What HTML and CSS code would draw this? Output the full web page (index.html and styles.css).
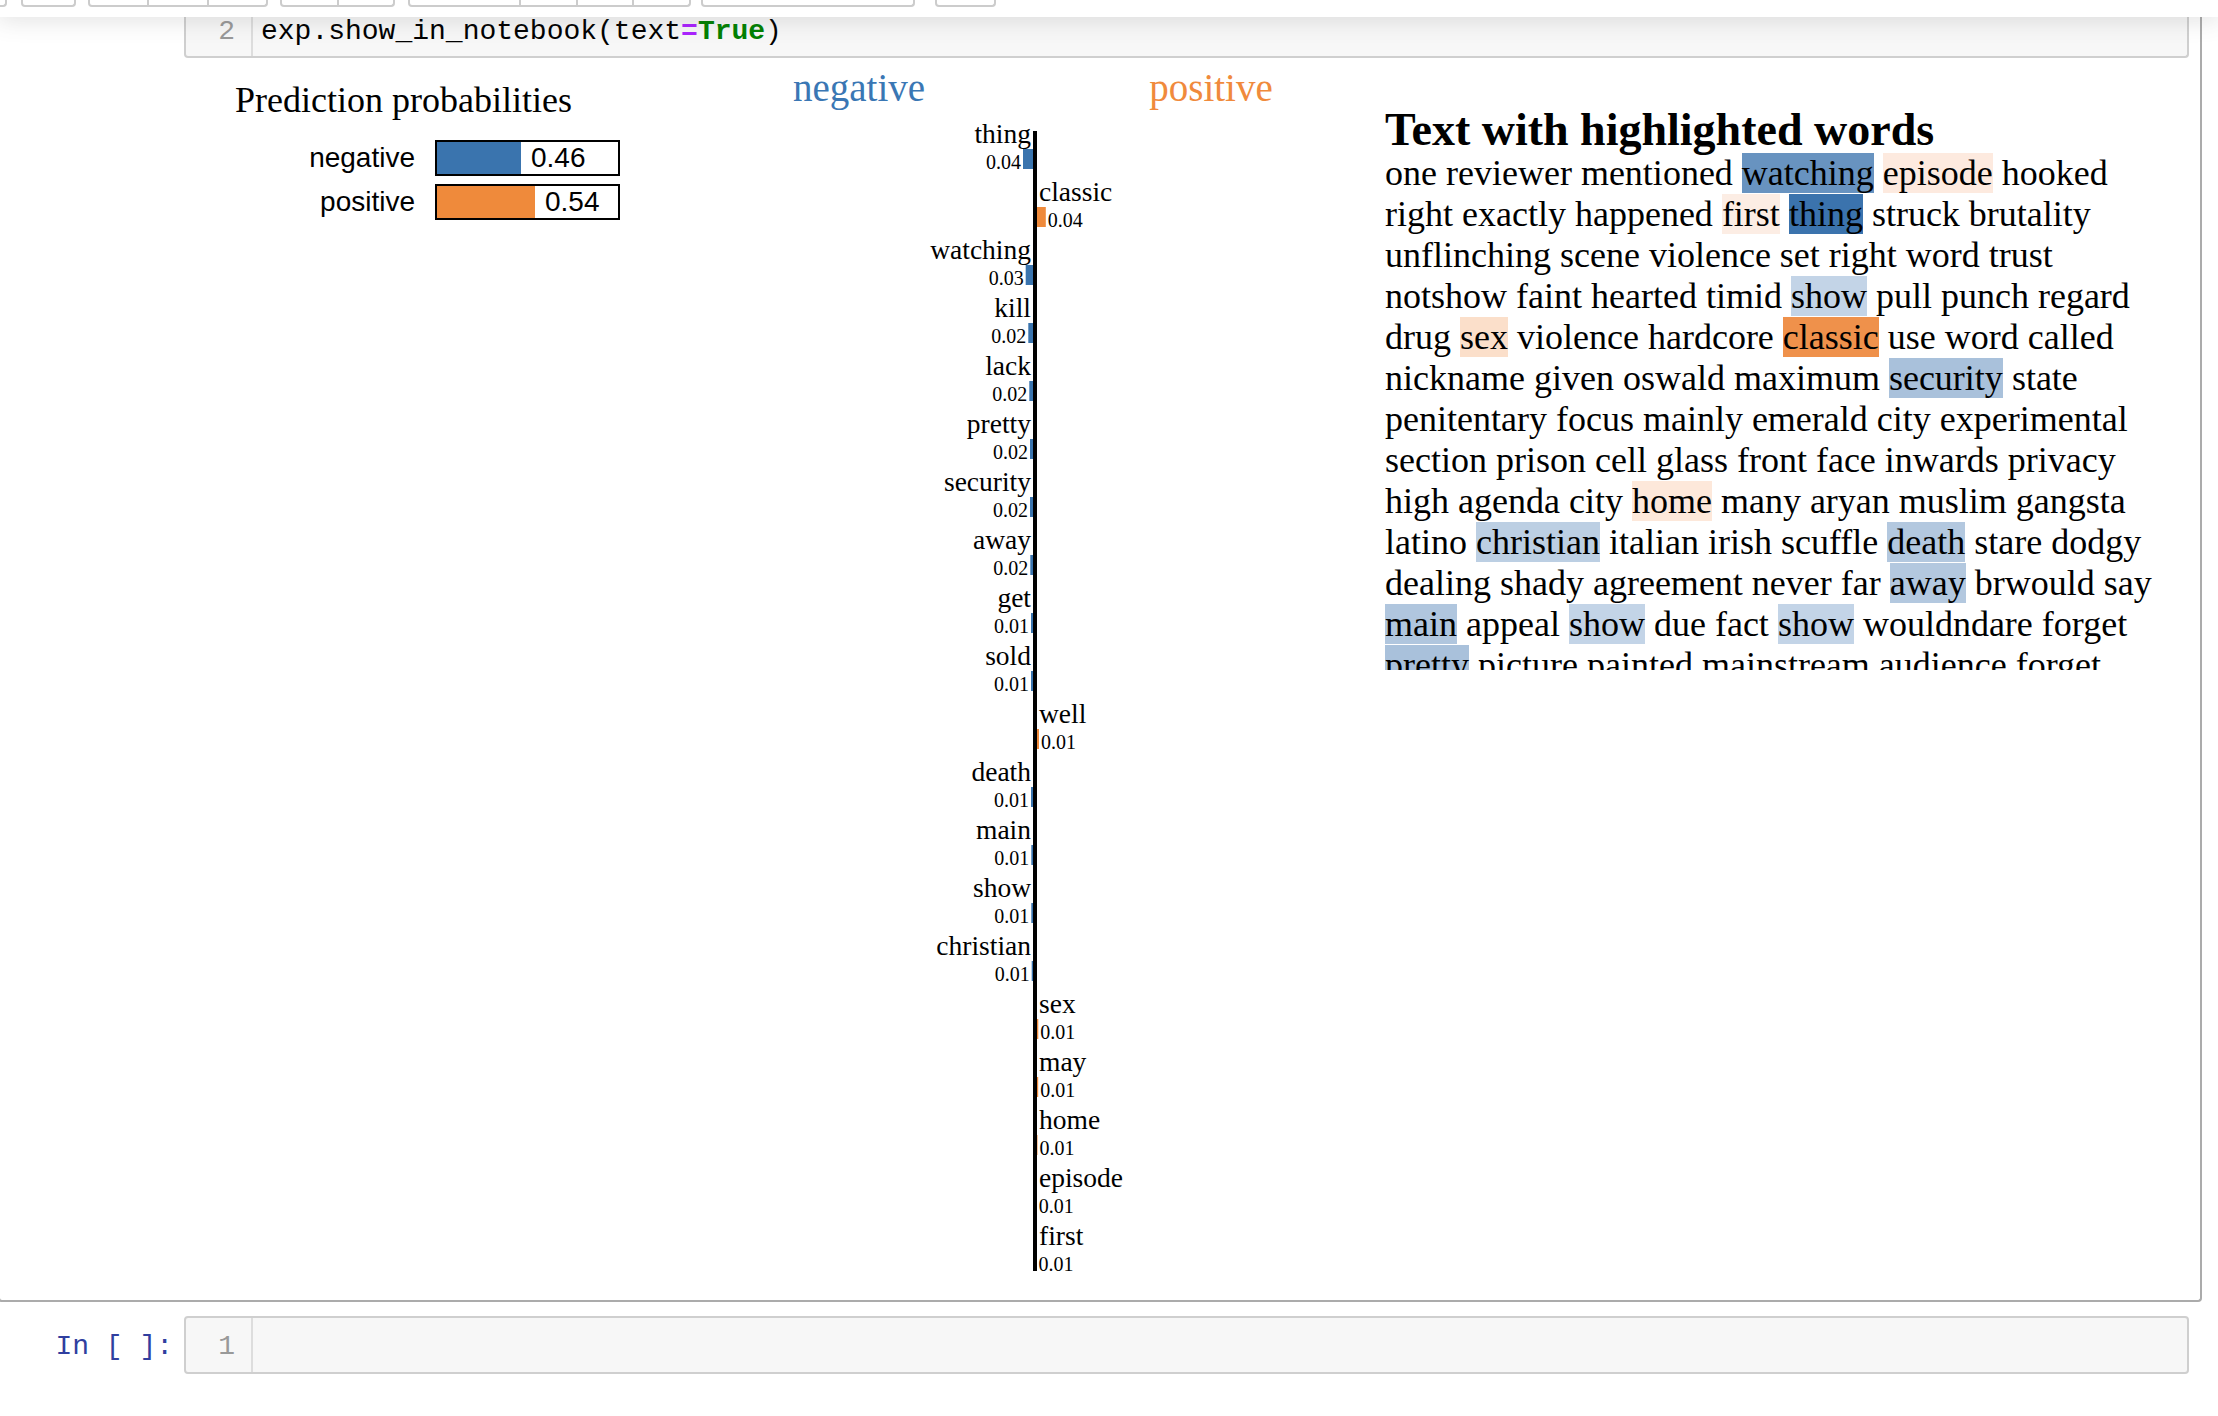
FILE: index.html
```html
<!DOCTYPE html>
<html lang="en">
<head>
<meta charset="utf-8">
<title>Notebook</title>
<link rel="stylesheet" href="styles.css">
</head>
<body>
<div class="header">
  <div class="toolbar">
    <div class="btn-group g0"><span class="btn"></span></div>
    <div class="btn-group g1"><span class="btn"></span></div>
    <div class="btn-group g2"><span class="btn"></span><span class="btn"></span><span class="btn"></span></div>
    <div class="btn-group g3"><span class="btn"></span><span class="btn"></span></div>
    <div class="btn-group g4"><span class="btn wide"></span><span class="btn"></span><span class="btn"></span><span class="btn"></span></div>
    <div class="btn-group g5"><span class="btn"></span></div>
    <div class="btn-group g6"><span class="btn"></span></div>
  </div>
</div>

<div class="notebook">
  <div class="cell selected">
    <div class="input">
      <div class="prompt"></div>
      <div class="input_area">
        <div class="gutter">2</div>
        <div class="code">exp.show_in_notebook(text<span class="cm-op">=</span><span class="cm-kw">True</span>)</div>
      </div>
    </div>
    <div class="output">
      <div class="proba">
        <div class="proba-title">Prediction probabilities</div>
        <div class="proba-row">
          <div class="proba-label">negative</div>
          <div class="proba-bar"><div class="proba-fill neg" style="width:84px"></div><span class="proba-val">0.46</span></div>
        </div>
        <div class="proba-row">
          <div class="proba-label">positive</div>
          <div class="proba-bar"><div class="proba-fill pos" style="width:98px"></div><span class="proba-val">0.54</span></div>
        </div>
      </div>

      <svg class="expl" width="702" height="1200" viewBox="0 0 702 1200">
        <text class="title t-neg" x="176" y="30" text-anchor="middle">negative</text>
        <text class="title t-pos" x="528" y="30" text-anchor="middle">positive</text>

        <text class="lbl" x="348" y="72" text-anchor="end">thing</text>
        <rect class="b-neg" x="340" y="78" width="12" height="20"/>
        <text class="val" x="338" y="97.5" text-anchor="end">0.04</text>

        <text class="lbl" x="356" y="130">classic</text>
        <rect class="b-pos" x="352" y="136" width="10.8" height="20"/>
        <text class="val" x="364.8" y="155.5">0.04</text>

        <text class="lbl" x="348" y="188" text-anchor="end">watching</text>
        <rect class="b-neg" x="342.7" y="194" width="9.3" height="20"/>
        <text class="val" x="340.7" y="213.5" text-anchor="end">0.03</text>

        <text class="lbl" x="348" y="246" text-anchor="end">kill</text>
        <rect class="b-neg" x="345.3" y="252" width="6.7" height="20"/>
        <text class="val" x="343.3" y="271.5" text-anchor="end">0.02</text>

        <text class="lbl" x="348" y="304" text-anchor="end">lack</text>
        <rect class="b-neg" x="346.3" y="310" width="5.7" height="20"/>
        <text class="val" x="344.3" y="329.5" text-anchor="end">0.02</text>

        <text class="lbl" x="348" y="362" text-anchor="end">pretty</text>
        <rect class="b-neg" x="347" y="368" width="5" height="20"/>
        <text class="val" x="345" y="387.5" text-anchor="end">0.02</text>

        <text class="lbl" x="348" y="420" text-anchor="end">security</text>
        <rect class="b-neg" x="347" y="426" width="5" height="20"/>
        <text class="val" x="345" y="445.5" text-anchor="end">0.02</text>

        <text class="lbl" x="348" y="478" text-anchor="end">away</text>
        <rect class="b-neg" x="347.3" y="484" width="4.7" height="20"/>
        <text class="val" x="345.3" y="503.5" text-anchor="end">0.02</text>

        <text class="lbl" x="348" y="536" text-anchor="end">get</text>
        <rect class="b-neg" x="348" y="542" width="4" height="20"/>
        <text class="val" x="346" y="561.5" text-anchor="end">0.01</text>

        <text class="lbl" x="348" y="594" text-anchor="end">sold</text>
        <rect class="b-neg" x="348" y="600" width="4" height="20"/>
        <text class="val" x="346" y="619.5" text-anchor="end">0.01</text>

        <text class="lbl" x="356" y="652">well</text>
        <rect class="b-pos" x="352" y="658" width="4" height="20"/>
        <text class="val" x="358" y="677.5">0.01</text>

        <text class="lbl" x="348" y="710" text-anchor="end">death</text>
        <rect class="b-neg" x="348" y="716" width="4" height="20"/>
        <text class="val" x="346" y="735.5" text-anchor="end">0.01</text>

        <text class="lbl" x="348" y="768" text-anchor="end">main</text>
        <rect class="b-neg" x="348.3" y="774" width="3.7" height="20"/>
        <text class="val" x="346.3" y="793.5" text-anchor="end">0.01</text>

        <text class="lbl" x="348" y="826" text-anchor="end">show</text>
        <rect class="b-neg" x="348.3" y="832" width="3.7" height="20"/>
        <text class="val" x="346.3" y="851.5" text-anchor="end">0.01</text>

        <text class="lbl" x="348" y="884" text-anchor="end">christian</text>
        <rect class="b-neg" x="348.7" y="890" width="3.3" height="20"/>
        <text class="val" x="346.7" y="909.5" text-anchor="end">0.01</text>

        <text class="lbl" x="356" y="942">sex</text>
        <rect class="b-pos" x="352" y="948" width="3.3" height="20"/>
        <text class="val" x="357.3" y="967.5">0.01</text>

        <text class="lbl" x="356" y="1000">may</text>
        <rect class="b-pos" x="352" y="1006" width="3.2" height="20"/>
        <text class="val" x="357.2" y="1025.5">0.01</text>

        <text class="lbl" x="356" y="1058">home</text>
        <rect class="b-pos" x="352" y="1064" width="2.5" height="20"/>
        <text class="val" x="356.5" y="1083.5">0.01</text>

        <text class="lbl" x="356" y="1116">episode</text>
        <rect class="b-pos" x="352" y="1122" width="1.75" height="20"/>
        <text class="val" x="355.75" y="1141.5">0.01</text>

        <text class="lbl" x="356" y="1174">first</text>
        <rect class="b-pos" x="352" y="1180" width="1.5" height="20"/>
        <text class="val" x="355.5" y="1199.5">0.01</text>

        <line class="axis" x1="352" x2="352" y1="60" y2="1200"/>
      </svg>

      <div class="textcol">
        <h3>Text with highlighted words</h3>
        <div class="hltext">one reviewer mentioned <span class="n78">watching</span> <span class="p15">episode</span> hooked right exactly happened <span class="p12">first</span> <span class="n100">thing</span> struck brutality unflinching scene violence set right word trust notshow faint hearted timid <span class="n30">show</span> pull punch regard drug <span class="p27">sex</span> violence hardcore <span class="p90">classic</span> use word called nickname given oswald maximum <span class="n42">security</span> state penitentary focus mainly emerald city experimental section prison cell glass front face inwards privacy high agenda city <span class="p18">home</span> many aryan muslim gangsta latino <span class="n33">christian</span> italian irish scuffle <span class="n38">death</span> stare dodgy dealing shady agreement never far <span class="n38">away</span> brwould say <span class="n40">main</span> appeal <span class="n30">show</span> due fact <span class="n30">show</span> wouldndare forget <span class="n42">pretty</span> picture painted mainstream audience forget</div>
      </div>
    </div>
  </div>

  <div class="cell">
    <div class="input">
      <div class="prompt">In [ ]:</div>
      <div class="input_area">
        <div class="gutter">1</div>
        <div class="code"></div>
      </div>
    </div>
  </div>
</div>
</body>
</html>
```

FILE: styles.css
```css
* { box-sizing: border-box; }

html, body {
  margin: 0;
  padding: 0;
  background: #fff;
}

body {
  width: 2218px;
  height: 1416px;
  overflow: hidden;
  font-family: "Liberation Sans", Arial, sans-serif;
  color: #000;
}

/* ---------- header / toolbar ---------- */
.header {
  position: relative;
  z-index: 2;
  height: 17px;
  background: #fff;
  box-shadow: 0 0 24px 2px rgba(87, 87, 87, 0.2);
}

.toolbar {
  display: flex;
  align-items: flex-start;
  height: 7px;
}

.btn-group {
  display: flex;
  flex: none;
  height: 7px;
  background: #fff;
  border: 2px solid #cccccc;
  border-top: none;
  border-radius: 0 0 4px 4px;
}

.btn { flex: 1; height: 100%; }
.btn.wide { flex: 2; }
.btn + .btn { border-left: 2px solid #cccccc; }

.g0 { margin-left: -20px; width: 27px; }
.g1 { margin-left: 14px; width: 55px; }
.g2 { margin-left: 12px; width: 180px; }
.g3 { margin-left: 12px; width: 115px; }
.g4 { margin-left: 13px; width: 283px; }
.g5 { margin-left: 10px; width: 214px; }
.g6 { margin-left: 20px; width: 61px; }

/* ---------- notebook cells ---------- */
.notebook { margin-top: -2px; }

.cell {
  margin-left: -2px;
  width: 2204px;
  border: 2px solid transparent;
  border-radius: 4px;
  padding: 12px 11px 10px 10px;
}

.cell.selected {
  border-color: #ababab;
  border-top: none;
  border-radius: 0 0 4px 4px;
  padding-top: 0;
}

.input { display: flex; }

.prompt {
  flex: none;
  width: 174px;
  padding: 14px 11px 0 0;
  text-align: right;
  white-space: pre;
  font: 28px/34px "Liberation Mono", "Courier New", monospace;
  color: #303f9f;
}

.input_area {
  flex: 1;
  display: flex;
  background: #f7f7f7;
  border: 2px solid #cfcfcf;
  border-radius: 4px;
}

.selected .input_area {
  border-top: none;
  border-radius: 0 0 4px 4px;
}

.gutter {
  flex: none;
  width: 67px;
  border-right: 2px solid #dddddd;
  padding: 12px 16px 8px 0;
  text-align: right;
  color: #999;
  font: 28px/34px "Liberation Mono", "Courier New", monospace;
}

.code {
  flex: 1;
  padding: 12px 8px 8px;
  white-space: pre;
  font: 28px/34px "Liberation Mono", "Courier New", monospace;
  color: #000;
  min-height: 54px;
}

.selected .gutter,
.selected .code {
  padding-top: 0;
  padding-bottom: 7px;
  min-height: 0;
}

.cm-op { color: #aa22ff; font-weight: bold; }
.cm-kw { color: #008000; font-weight: bold; }

/* ---------- output ---------- */
.output {
  display: flex;
  align-items: flex-start;
  padding: 0 0 19px 174px;
}

/* prediction probabilities */
.proba { flex: none; width: 499px; }

.proba-title {
  margin: 22px 0 0 51px;
  font: 36px/40px "Liberation Serif", "Times New Roman", serif;
}

.proba-row {
  display: flex;
  align-items: center;
  height: 36px;
  margin-top: 8px;
}

.proba-title + .proba-row { margin-top: 20px; }

.proba-label {
  flex: none;
  width: 231px;
  margin-right: 20px;
  text-align: right;
  font: 28px/36px "Liberation Sans", Arial, sans-serif;
}

.proba-bar {
  flex: none;
  display: flex;
  align-items: center;
  width: 185px;
  height: 36px;
  border: 2px solid #000;
}

.proba-fill { flex: none; height: 100%; }
.proba-fill.neg { background: #3a74ae; }
.proba-fill.pos { background: #ef8a3b; }

.proba-val {
  margin-left: 10px;
  font: 28px/32px "Liberation Sans", Arial, sans-serif;
}

/* explanation bar chart */
.expl {
  flex: none;
  width: 702px;
  height: 1200px;
  margin-top: 13px;
  overflow: visible;
}

.expl text { font-family: "Liberation Serif", "Times New Roman", serif; fill: #000; }
.expl .title { font-size: 39px; }
.expl .t-neg { fill: #3a77b4; }
.expl .t-pos { fill: #f08a3c; }
.expl .lbl { font-size: 27.5px; }
.expl .val { font-size: 20px; }
.expl .b-neg { fill: #3a74ae; }
.expl .b-pos { fill: #ef8a3b; }
.expl .axis { stroke: #000; stroke-width: 4; }

/* highlighted text */
.textcol {
  flex: none;
  width: 784px;
  margin-top: 13px;
  max-height: 599px;
  overflow: hidden;
}

.textcol h3 {
  margin: 36px 0 0;
  font: bold 46px/46px "Liberation Serif", "Times New Roman", serif;
}

.hltext {
  font: 36px/41px "Liberation Serif", "Times New Roman", serif;
}

.n100 { background: #3b73ad; }
.n78  { background: #6893c0; }
.n42  { background: #a9c1db; }
.n40  { background: #b0c6de; }
.n38  { background: #b3c8df; }
.n33  { background: #bccfe3; }
.n30  { background: #c3d4e7; }
.p90  { background: #ef914b; }
.p27  { background: #fbdfca; }
.p18  { background: #fde8da; }
.p15  { background: #fdeadf; }
.p12  { background: #fcede4; }
```
